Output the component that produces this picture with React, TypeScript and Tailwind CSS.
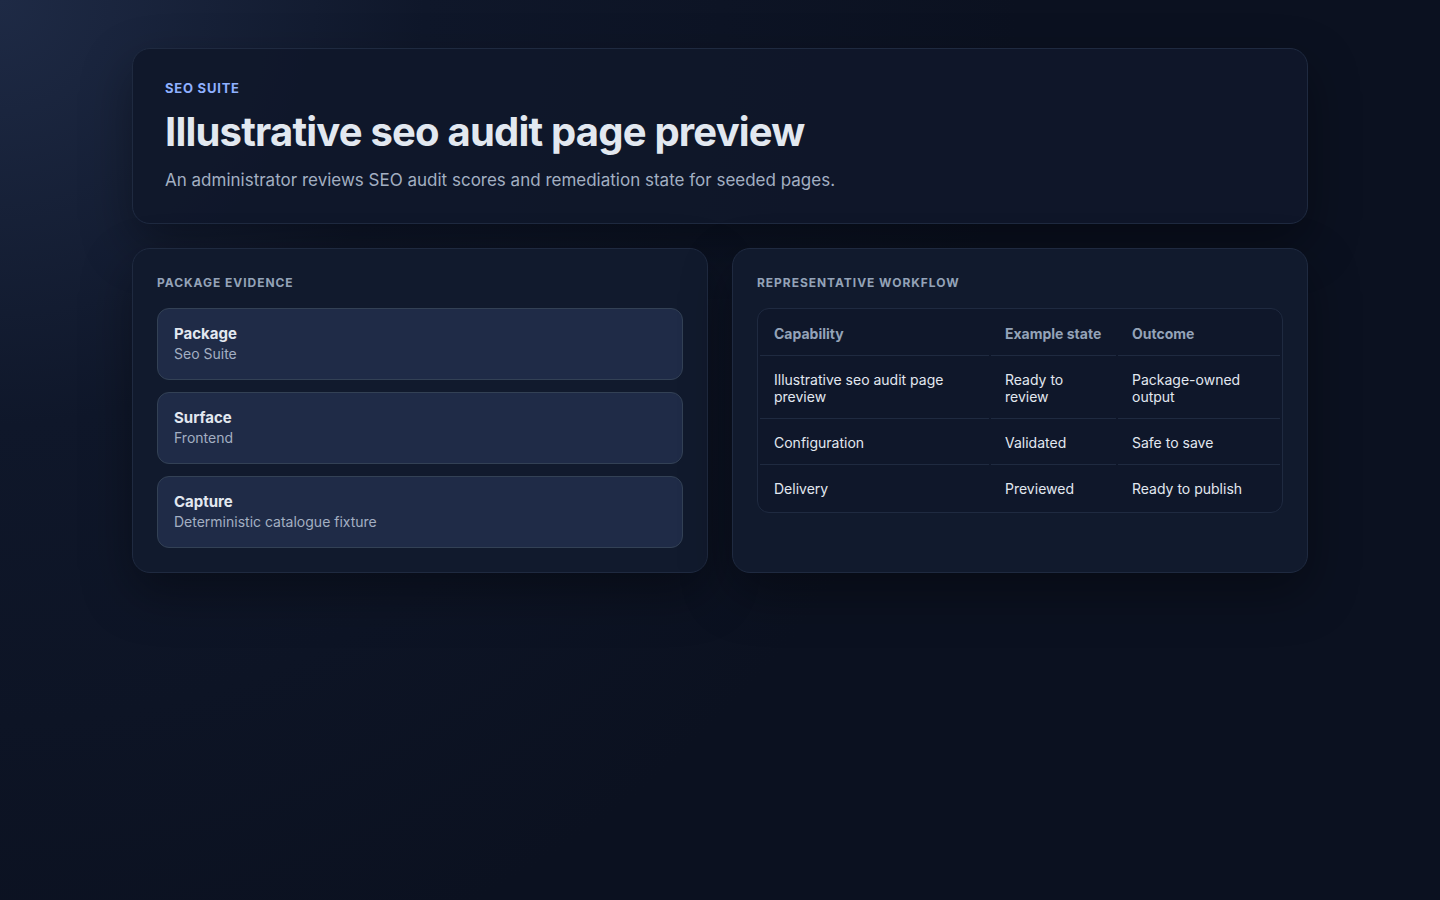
const evidence = [
  { label: "Package", value: "Seo Suite" },
  { label: "Surface", value: "Frontend" },
  { label: "Capture", value: "Deterministic catalogue fixture" },
];

const rows = [
  ["Illustrative seo audit page preview", "Ready to review", "Package-owned output"],
  ["Configuration", "Validated", "Safe to save"],
  ["Delivery", "Previewed", "Ready to publish"],
];

export default function App() {
  return (
    <div
      className="min-h-[900px] w-full bg-[#0b1120] bg-[radial-gradient(circle_at_0%_0%,#1e2a45_0%,#0f172a_25%,#0b1120_60%)] text-slate-200"
      style={{ fontFamily: "Inter, 'Noto Sans', sans-serif" }}
    >
      <div className="mx-auto w-[1176px] pt-12 flex flex-col gap-6">
        {/* Header */}
        <div className="rounded-[18px] border border-[#1f2a40] bg-[#0f172a]/90 px-8 pt-[30px] pb-[30px] shadow-[0_20px_50px_rgba(0,0,0,0.35)]">
          <p className="text-[13px] font-bold tracking-[0.06em] text-[#8fb0ff]">SEO SUITE</p>
          <h1 className="mt-[9px] text-[40px] leading-[48px] font-bold tracking-[-0.02em] text-[#e2e8f0]">
            Illustrative seo audit page preview
          </h1>
          <p className="mt-[12px] text-[17px] text-[#a3afc2]">
            An administrator reviews SEO audit scores and remediation state for seeded pages.
          </p>
        </div>

        <div className="grid grid-cols-2 gap-6">
          {/* Evidence */}
          <div className="rounded-[18px] border border-[#1f2a40] bg-[#111a2d] p-6 shadow-[0_20px_50px_rgba(0,0,0,0.35)]">
            <h2 className="text-[12px] font-bold tracking-[0.08em] text-[#94a3b8] leading-[20px]">PACKAGE EVIDENCE</h2>
            <div className="mt-[15px] flex flex-col gap-3">
              {evidence.map((e) => (
                <div key={e.label} className="rounded-[12px] border border-[#334155] bg-[#1f2b47] px-4 py-[15px]">
                  <div className="text-[15px] font-bold leading-[20px] text-[#e2e8f0]">{e.label}</div>
                  <div className="text-[14px] leading-[20px] text-[#a3afc2]">{e.value}</div>
                </div>
              ))}
            </div>
          </div>

          {/* Workflow */}
          <div className="rounded-[18px] border border-[#1f2a40] bg-[#111a2d] p-6 shadow-[0_20px_50px_rgba(0,0,0,0.35)]">
            <h2 className="text-[12px] font-bold tracking-[0.08em] text-[#94a3b8] leading-[20px]">REPRESENTATIVE WORKFLOW</h2>
            <div className="mt-[15px] rounded-[12px] border border-[#1f2a40] bg-[#0f172a]">
              <table className="w-full border-separate border-spacing-[2px] text-[14px] leading-[17px]">
                <thead>
                  <tr className="text-left text-[#94a3b8]">
                    <th className="w-[229px] border-b border-[#1f2a40] px-[14px] pt-[14px] pb-[13px] align-top font-bold">Capability</th>
                    <th className="w-[125px] border-b border-[#1f2a40] px-[14px] pt-[14px] pb-[13px] align-top font-bold">Example state</th>
                    <th className="border-b border-[#1f2a40] px-[14px] pt-[14px] pb-[13px] align-top font-bold">Outcome</th>
                  </tr>
                </thead>
                <tbody>
                  {rows.map((r, i) => (
                    <tr key={i} className="text-[#e2e8f0]">
                      {r.map((c, j) => (
                        <td
                          key={j}
                          className={`px-[14px] py-[13px] align-top ${i < rows.length - 1 ? "border-b border-[#1f2a40]" : ""}`}
                        >
                          {c}
                        </td>
                      ))}
                    </tr>
                  ))}
                </tbody>
              </table>
            </div>
          </div>
        </div>
      </div>
    </div>
  );
}
